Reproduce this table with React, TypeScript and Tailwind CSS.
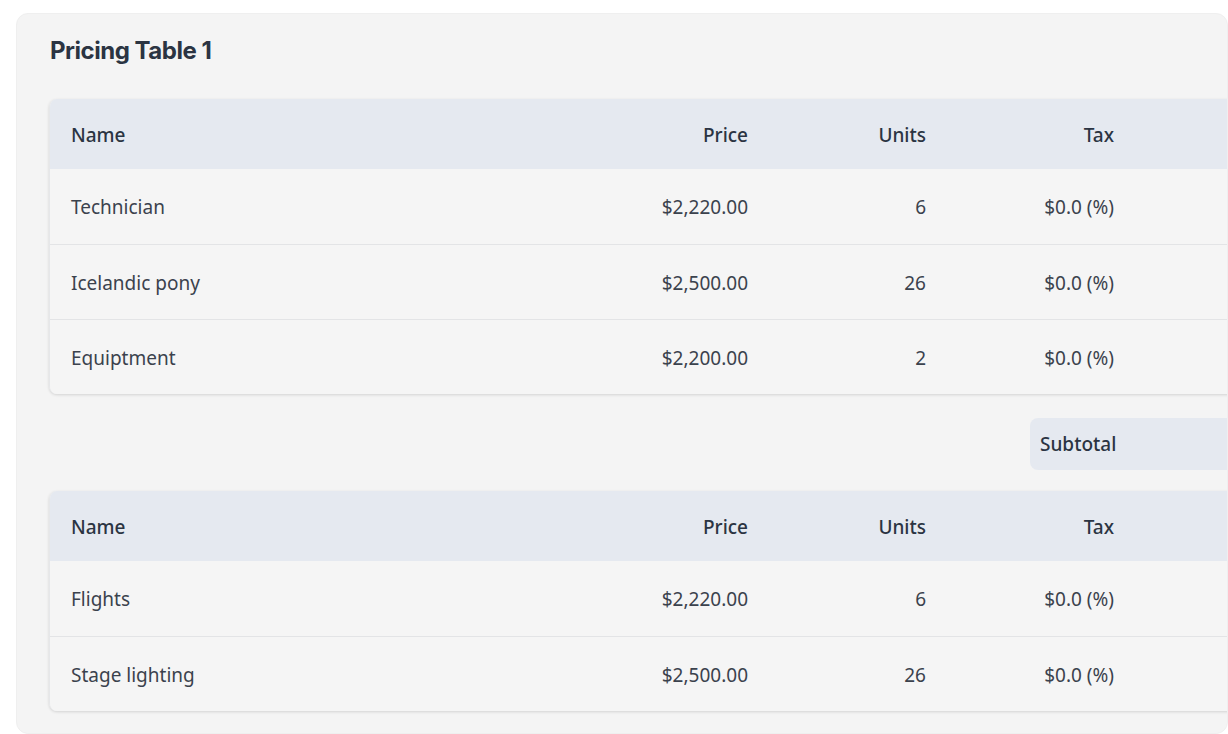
import React from "react";

type Row = { name: string; price: string; units: string; tax: string };

const rowsA: Row[] = [
  { name: "Technician", price: "$2,220.00", units: "6", tax: "$0.0 (%)" },
  { name: "Icelandic pony", price: "$2,500.00", units: "26", tax: "$0.0 (%)" },
  { name: "Equiptment", price: "$2,200.00", units: "2", tax: "$0.0 (%)" },
];

const rowsB: Row[] = [
  { name: "Flights", price: "$2,220.00", units: "6", tax: "$0.0 (%)" },
  { name: "Stage lighting", price: "$2,500.00", units: "26", tax: "$0.0 (%)" },
];

const cols = "grid grid-cols-[511px_210px_178px_188px_200px]";

const PriceTable = ({ rows }: { rows: Row[] }) => (
  <div className="w-[1287px] rounded-lg overflow-hidden border-l border-[#e6e7e9] shadow-[0_1px_3px_rgba(0,0,0,0.14)]">
    <div className={`${cols} h-[70px] pt-[2px] items-center bg-[#e5e9f0] text-[#2b3442] font-medium`}>
      <div className="pl-[21px] pr-[22px]">Name</div>
      <div className="pl-[22px] pr-[23px] text-right">Price</div>
      <div className="pl-[22px] pr-[23px] text-right">Units</div>
      <div className="pl-[22px] pr-[23px] text-right">Tax</div>
      <div className="px-[22px] text-right"></div>
    </div>
    {rows.map((r, i) => (
      <div
        key={i}
        className={`${cols} h-[75px] pt-[2px] items-center bg-[#f5f5f5] text-[#3b424d] ${i > 0 ? "border-t border-[#e3e4e6]" : ""}`}
      >
        <div className="pl-[21px] pr-[22px]">{r.name}</div>
        <div className="pl-[22px] pr-[23px] text-right">{r.price}</div>
        <div className="pl-[22px] pr-[23px] text-right">{r.units}</div>
        <div className="pl-[22px] pr-[23px] text-right">{r.tax}</div>
        <div className="px-[22px] text-right"></div>
      </div>
    ))}
  </div>
);

const App = () => {
  return (
    <div className="bg-white min-h-screen pl-4 pt-[13px] overflow-hidden">
      <div
        className="w-[1212px] h-[721px] bg-[#f4f4f4] rounded-xl border border-[#efefef] overflow-hidden pl-[32px] text-[19px]"
        style={{ fontFamily: '"Noto Sans", "Open Sans", sans-serif' }}
      >
        <h1
          className="pt-[21px] pl-[1px] text-[24px] leading-[32px] font-bold text-[#2b3442] tracking-[-0.02em]"
          style={{ fontFamily: "Inter, sans-serif" }}
        >
          Pricing Table 1
        </h1>
        <div className="mt-[32px]">
          <PriceTable rows={rowsA} />
        </div>
        <div className="mt-[24px] ml-[981px] w-[300px] h-[52px] pt-[1px] rounded-lg bg-[#e5e9f0] flex items-center px-[10px] font-medium text-[#2b3442]">
          Subtotal
        </div>
        <div className="mt-[21px]">
          <PriceTable rows={rowsB} />
        </div>
      </div>
    </div>
  );
};

export default App;
